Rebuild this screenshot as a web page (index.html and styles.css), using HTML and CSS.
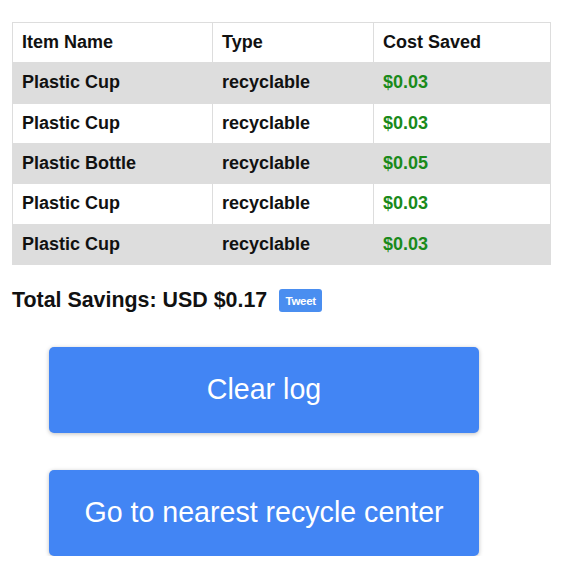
FILE: index.html
```html
<!DOCTYPE html>
<html>
<head>
<meta charset="utf-8">
<link rel="stylesheet" href="styles.css">
</head>
<body>
<div class="page">
  <table class="log">
    <colgroup>
      <col class="c1"><col class="c2"><col class="c3">
    </colgroup>
    <tr class="head"><th>Item Name</th><th>Type</th><th>Cost Saved</th></tr>
    <tr class="shade"><td>Plastic Cup</td><td>recyclable</td><td class="money">$0.03</td></tr>
    <tr><td>Plastic Cup</td><td>recyclable</td><td class="money">$0.03</td></tr>
    <tr class="shade"><td>Plastic Bottle</td><td>recyclable</td><td class="money">$0.05</td></tr>
    <tr><td>Plastic Cup</td><td>recyclable</td><td class="money">$0.03</td></tr>
    <tr class="shade"><td>Plastic Cup</td><td>recyclable</td><td class="money">$0.03</td></tr>
  </table>
  <div class="total">
    <span class="total-text">Total Savings: USD $0.17</span>
    <span class="tweet">Tweet</span>
  </div>
  <div class="actions">
    <button class="btn">Clear log</button>
    <button class="btn">Go to nearest recycle center</button>
  </div>
</div>
</body>
</html>
```
FILE: styles.css
```css
html, body { margin: 0; padding: 0; background: #fff; }
body { font-family: "Liberation Sans", Arial, sans-serif; color: #111; }
.page { padding: 22px 16px 0 12px; }
.log { border-collapse: collapse; width: 538px; table-layout: fixed; }
.c1 { width: 200px; }
.c2 { width: 161px; }
.c3 { width: 177px; }
.log th, .log td {
  border: 1px solid #dddddd;
  height: 39.33px;
  padding: 0 9px;
  text-align: left;
  font-size: 18px;
  font-weight: bold;
  color: #111;
}
.shade td { background: #dddddd; }
.log td.money { color: #1a8a1a; }
.total { display: flex; align-items: center; margin-top: 24px; height: 24px; }
.total-text { font-size: 21.4px; font-weight: bold; color: #111; }
.tweet {
  margin-left: 12px;
  background: #4a8ef0;
  color: #fff;
  font-size: 11.5px;
  font-weight: bold;
  border-radius: 3px;
  width: 43px;
  height: 23px;
  display: flex;
  align-items: center;
  justify-content: center;
  letter-spacing: -0.3px;
}
.actions { display: flex; flex-direction: column; gap: 37px; margin-top: 34px; margin-left: 37px; }
.btn {
  width: 430px;
  height: 86px;
  background: #4285f4;
  color: #fff;
  border: none;
  border-radius: 5px;
  font-family: "Liberation Sans", Arial, sans-serif;
  font-size: 28.6px;
  box-shadow: 0 1px 4px rgba(0,0,0,0.25);
  padding: 0;
}
```
